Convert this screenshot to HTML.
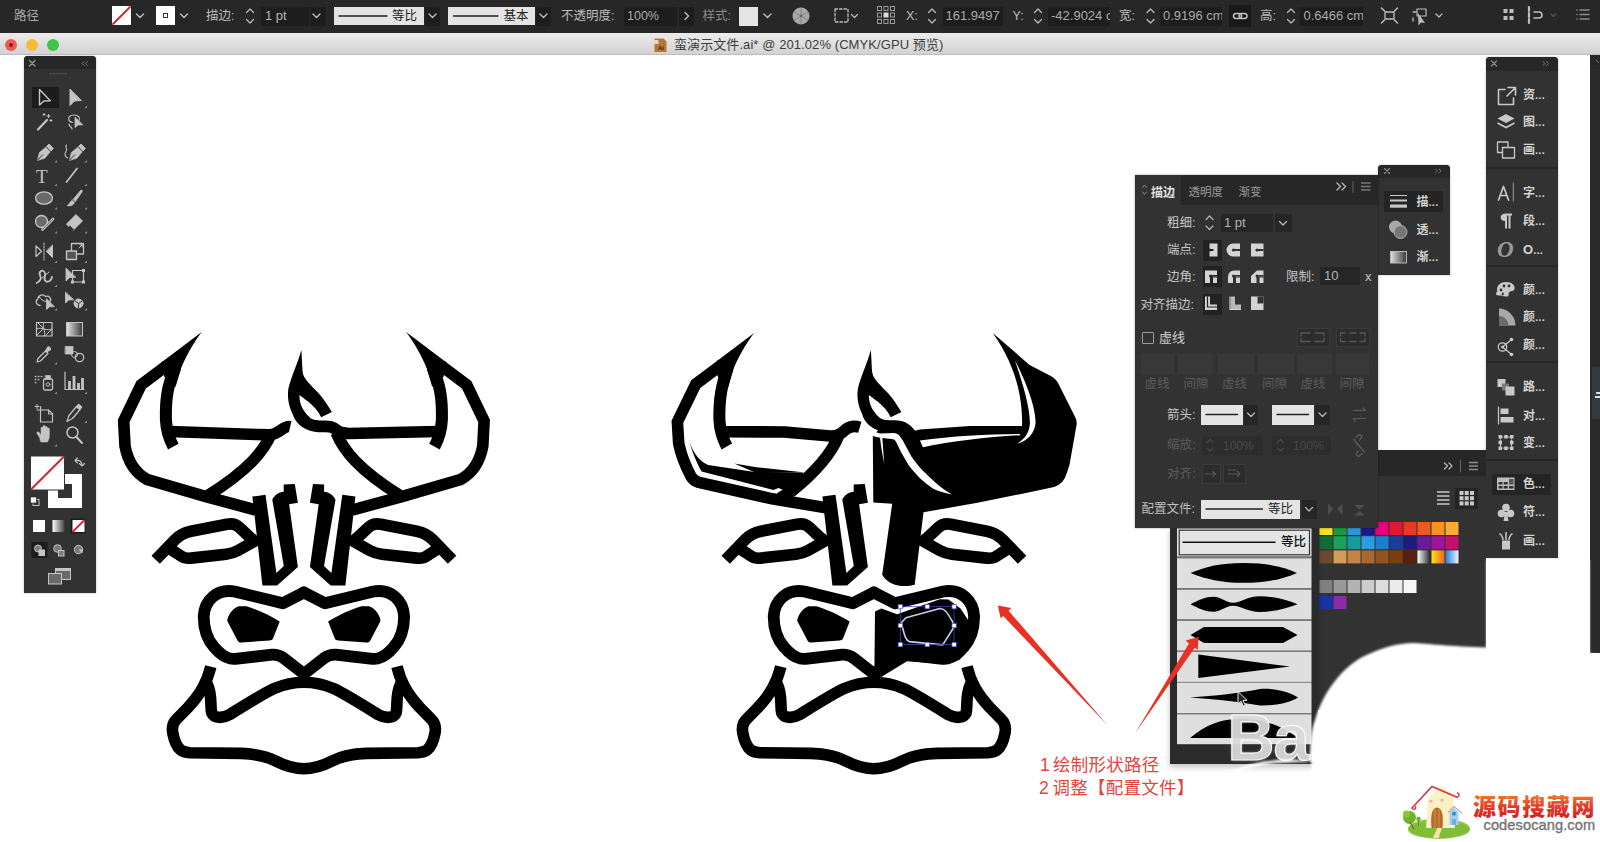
<!DOCTYPE html>
<html lang="zh-CN">
<head>
<meta charset="utf-8">
<title>蛮演示文件.ai</title>
<style>
html,body{margin:0;padding:0;}
body{width:1600px;height:842px;overflow:hidden;background:#fff;position:relative;
 font-family:"Liberation Sans","Noto Sans CJK SC",sans-serif;font-size:12px;color:#c8c8c8;}
.abs{position:absolute;}
#topbar{left:0;top:0;width:1600px;height:33px;background:#272727;}
#titlebar{left:0;top:33px;width:1600px;height:22px;background:linear-gradient(#ececec,#d2d2d2);border-bottom:1px solid #bdbdbd;box-sizing:border-box;}
.t{position:absolute;white-space:nowrap;line-height:1;}
.fld{position:absolute;background:#1e1e1e;}
.wbox{position:absolute;background:#e4e4e4;}
svg{position:absolute;left:0;top:0;overflow:visible;}
</style>
</head>
<body>
<div id="topbar" class="abs"></div>
<div id="titlebar" class="abs"></div>
<div id="tb" class="abs" style="left:0;top:0;width:1600px;height:56px;">
<style>
#tb .t{font-size:12.5px;color:#bdbdbd;top:9.5px;}
#tb .fld{top:7px;height:19px;background:#1d1d1d;}
#tb .wbox{top:7px;height:18px;}
</style>
<span class="t" style="left:14px;font-size:12.5px;color:#aaa;">路径</span>
<div class="abs" style="left:112px;top:6px;width:19px;height:19px;background:#fff;"></div>
<div class="abs" style="left:155.5px;top:6px;width:19px;height:19px;background:#fff;"></div>
<div class="abs" style="left:162.5px;top:13px;width:3px;height:3px;border:1.5px solid #333;"></div>
<span class="t" style="left:206px;">描边:</span>
<div class="fld" style="left:261px;width:48px;"></div>
<div class="fld" style="left:310px;width:16px;"></div>
<span class="t" style="left:265px;font-size:13px;top:9px;color:#b5b5b5;">1 pt</span>
<div class="wbox" style="left:334px;width:90px;"></div>
<div class="fld" style="left:425px;width:15px;"></div>
<span class="t" style="left:392px;color:#222;font-size:12.5px;">等比</span>
<div class="wbox" style="left:448px;width:87px;"></div>
<div class="fld" style="left:536px;width:15px;"></div>
<span class="t" style="left:503.5px;color:#222;font-size:12.5px;">基本</span>
<span class="t" style="left:561px;">不透明度:</span>
<div class="fld" style="left:623.5px;width:53px;"></div>
<div class="fld" style="left:679px;width:15px;"></div>
<span class="t" style="left:627px;color:#aaa;">100%</span>
<span class="t" style="left:702.5px;color:#8a8a8a;">样式:</span>
<div class="abs" style="left:738.5px;top:6.5px;width:19px;height:19px;background:#e4e4e4;"></div>
<span class="t" style="left:906px;">X:</span>
<div class="fld" style="left:942.5px;width:60px;"></div>
<span class="t" style="left:945.5px;color:#aaa;font-size:13px;top:9px;">161.9497</span>
<span class="t" style="left:1012.5px;">Y:</span>
<div class="fld" style="left:1047.5px;width:62px;overflow:hidden;"><span class="t" style="left:3.5px;top:2px;color:#aaa;font-size:13px;">-42.9024 cm</span></div>
<span class="t" style="left:1119px;">宽:</span>
<div class="fld" style="left:1160px;width:62px;overflow:hidden;"><span class="t" style="left:3px;top:2px;color:#aaa;font-size:13px;">0.9196 cm</span></div>
<div class="fld" style="left:1229px;width:22px;top:5px;height:22px;background:#191919;"></div>
<span class="t" style="left:1260px;">高:</span>
<div class="fld" style="left:1299.5px;width:63px;overflow:hidden;"><span class="t" style="left:4px;top:2px;color:#aaa;font-size:13px;">0.6466 cm</span></div>
<!-- title bar -->
<div class="abs" style="left:5px;top:39px;width:12px;height:12px;border-radius:6px;background:#ee5b55;"></div>
<div class="abs" style="left:9px;top:43px;width:4px;height:4px;border-radius:2px;background:#8e1a14;"></div>
<div class="abs" style="left:26px;top:39px;width:12px;height:12px;border-radius:6px;background:#f6bd3b;"></div>
<div class="abs" style="left:46.5px;top:39px;width:12px;height:12px;border-radius:6px;background:#3ec54a;"></div>
<span class="t" style="left:674px;top:38px;font-size:13px;letter-spacing:.08px;color:#3c3c3c;">蛮演示文件.ai* @ 201.02% (CMYK/GPU 预览)</span>
<svg width="1600" height="56" viewBox="0 0 1600 56">
 <g fill="none" stroke="#bdbdbd" stroke-width="1.4" stroke-linecap="round" stroke-linejoin="round">
  <line x1="113" y1="24" x2="130" y2="7" stroke="#d2232a" stroke-width="1.8"/>
  <path d="M136.5 14l3.5 3.5 3.5-3.5"/>
  <path d="M180.5 14l3.5 3.5 3.5-3.5"/>
  <path d="M246.5 12.5l3.5-3.5 3.5 3.5M246.5 19.5l3.5 3.5 3.5-3.5" stroke-width="1.2"/>
  <path d="M313 14l3.5 3.5 3.5-3.5"/>
  <path d="M429 14l3.5 3.5 3.5-3.5"/>
  <path d="M540 14l3.5 3.5 3.5-3.5"/>
  <path d="M685 12.5l3.5 3.5-3.5 3.5"/>
  <path d="M764 14l3.5 3.5 3.5-3.5"/>
  <line x1="339" y1="16" x2="387" y2="16" stroke="#222" stroke-width="1.3"/>
  <line x1="453.5" y1="16" x2="498" y2="16" stroke="#222" stroke-width="1.3"/>
  <!-- steppers -->
  <path d="M928.5 12.5l3.5-3.5 3.5 3.5M928.5 19.5l3.5 3.5 3.5-3.5" stroke-width="1.2"/>
  <path d="M1034.5 12.5l3.5-3.5 3.5 3.5M1034.5 19.5l3.5 3.5 3.5-3.5" stroke-width="1.2"/>
  <path d="M1147 12.5l3.5-3.5 3.5 3.5M1147 19.5l3.5 3.5 3.5-3.5" stroke-width="1.2"/>
  <path d="M1287.5 12.5l3.5-3.5 3.5 3.5M1287.5 19.5l3.5 3.5 3.5-3.5" stroke-width="1.2"/>
  <!-- dashed rect icon -->
  <rect x="835" y="9" width="13" height="13" stroke-dasharray="2.5 2" stroke-width="1.3"/>
  <path d="M851.5 14.5l3 3 3-3" stroke-width="1.2"/>
  <!-- link icon -->
  <rect x="1233.5" y="13.5" width="8" height="5" rx="2.5" stroke-width="1.5"/>
  <rect x="1239" y="13.5" width="8" height="5" rx="2.5" stroke-width="1.5"/>
  <!-- icon1 -->
  <rect x="1385" y="12" width="9" height="7" stroke-width="1.3"/>
  <path d="M1381.5 8l3 3M1397.5 8l-3 3M1381.5 23l3-3M1397.5 23l-3-3" stroke-width="1.5"/>
  <!-- icon2 -->
  <rect x="1417" y="9" width="9" height="7" stroke-width="1.2"/>
  <path d="M1413 12h3M1413 18v3" stroke-width="1.3"/>
  <path d="M1436 14l3 3 3-3" stroke-width="1.2"/>
  <path d="M1551 14l2.5 2.5 2.5-2.5" stroke="#555" stroke-width="1.2"/>
  <!-- icon4 -->
  <path d="M1529 7v17" stroke-width="2.2" stroke-dasharray="4 2"/>
  <path d="M1534 12h5a3 3 0 0 1 0 6h-5" stroke-width="1.6"/>
  <!-- list icon -->
  <path d="M1580 10h9M1580 14.5h9M1580 19h9" stroke="#8a8a8a" stroke-width="1.5"/>
  <path d="M1577 10h.1M1577 14.5h.1M1577 19h.1" stroke="#8a8a8a" stroke-width="1.5"/>
 </g>
 <g fill="#bdbdbd">
  <path d="M1418 13l7 10-4-.5-2.5 3z"/>
  <circle cx="801" cy="16" r="8.5" fill="#a8a8a8"/>
  <g fill="#3a3a3a"><circle cx="801" cy="16" r="1.2"/><path d="M801 8.5v15M794 12l14 8M794 20l14-8" stroke="#777" stroke-width=".7"/></g>
  <!-- 9 grid -->
  <g fill="none" stroke="#9a9a9a" stroke-width="1">
   <rect x="877.5" y="6.5" width="4" height="4"/><rect x="884" y="6.5" width="4" height="4"/><rect x="890.5" y="6.5" width="4" height="4"/>
   <rect x="877.5" y="13" width="4" height="4"/><rect x="890.5" y="13" width="4" height="4"/>
   <rect x="877.5" y="19.5" width="4" height="4"/><rect x="884" y="19.5" width="4" height="4"/><rect x="890.5" y="19.5" width="4" height="4"/>
  </g>
  <rect x="883.5" y="12.5" width="5" height="5" fill="#ddd"/>
  <!-- icon3 four squares -->
  <rect x="1503.500" y="9" width="4" height="4"/><rect x="1509.5" y="9" width="4" height="4"/><rect x="1503.5" y="16" width="4" height="4"/><rect x="1509.5" y="16" width="4" height="4"/>
  <!-- doc icon -->
  <path d="M654.500 38.500h9l3 3v10.500h-12z" fill="#b5763a"/>
  <path d="M653.500 40h5v4h-5z" fill="#e9d9c3"/>
 </g>
</svg>
<span class="t" style="left:658px;top:44.500px;font-size:6px;color:#3b2511;font-weight:bold;">Ai</span>
</div>
<!-- bulls -->
<svg width="1600" height="842" viewBox="0 0 1600 842">
<g id="bullL">
<path d="M 166.7 365.7 L 141.1 384.9 L 123.7 421.0 L 125.0 446.0 C 127.5 459.7 133.7 472.2 147.4 479.6 L 206.0 496.6 L 255.9 510.1" fill="none" stroke="#000" stroke-width="11.6" stroke-linecap="butt" stroke-linejoin="miter"/>
<path d="M 441.1 365.7 L 466.7 384.9 L 484.1 421.0 L 482.8 446.0 C 480.3 459.7 474.1 472.2 460.4 479.6 L 401.8 496.6 L 351.9 510.1" fill="none" stroke="#000" stroke-width="11.6" stroke-linecap="butt" stroke-linejoin="miter"/>
<path d="M 201.7 332.1 C 192.7 344.0 185.1 358.3 181.1 368.2 L 175.6 386.8 L 164.2 376.8 L 161.3 362.5 Z" fill="#000"/>
<path d="M 406.1 332.1 C 415.1 344.0 422.7 358.3 426.7 368.2 L 432.2 386.8 L 443.6 376.8 L 446.5 362.5 Z" fill="#000"/>
<path d="M 175.3 367.4 C 167.9 384.9 165.4 397.3 165.9 419.8 C 166.4 429.8 168.9 438.5 173.3 446.7" fill="none" stroke="#000" stroke-width="12" stroke-linecap="butt" stroke-linejoin="round"/>
<path d="M 432.5 367.4 C 439.9 384.9 442.4 397.3 441.9 419.8 C 441.4 429.8 438.9 438.5 434.5 446.7" fill="none" stroke="#000" stroke-width="12" stroke-linecap="butt" stroke-linejoin="round"/>
<path d="M 271.6 432.7 C 264.6 449.7 249.7 469.7 206.0 496.6" fill="none" stroke="#000" stroke-width="11.6" stroke-linecap="butt" stroke-linejoin="round"/>
<path d="M 336.2 432.7 C 343.2 449.7 358.1 469.7 401.8 496.6" fill="none" stroke="#000" stroke-width="11.6" stroke-linecap="butt" stroke-linejoin="round"/>
<path d="M 252.4 496.6 L 265.5 494.8 L 276.4 573.0 L 283.8 566.1 L 272.3 499.7 C 274.3 495.1 278.6 492.3 283.7 491.7 L 283.7 484.6 L 294.8 484.0 L 297.9 502.8 L 289.1 504.3 L 297.9 566.9 L 277.1 585.4 L 262.4 585.4 Z" fill="#000"/>
<path d="M 355.4 496.6 L 342.3 494.8 L 331.4 573.0 L 324.0 566.1 L 335.5 499.7 C 333.5 495.1 329.2 492.3 324.1 491.7 L 324.1 484.6 L 313.0 484.0 L 309.9 502.8 L 318.7 504.3 L 309.9 566.9 L 330.7 585.4 L 345.4 585.4 Z" fill="#000"/>
<path d="M 155.7 559.8 L 175 539.7 Q 181.3 533.2 191 531.2 L 227 524.2 Q 234.5 522.7 239.5 527.4 L 256.5 543.6" fill="none" stroke="#000" stroke-width="11.7" stroke-linecap="butt" stroke-linejoin="round"/>
<path d="M 452.1 559.8 L 432.8 539.7 Q 426.5 533.2 416.8 531.2 L 380.8 524.2 Q 373.3 522.7 368.3 527.4 L 351.3 543.6" fill="none" stroke="#000" stroke-width="11.7" stroke-linecap="butt" stroke-linejoin="round"/>
<path d="M 170.9 549.3 L 181 556 Q 185.1 558.8 191 558.1 L 226 554.2 Q 232.6 553.5 238 550.5 L 258.5 539" fill="none" stroke="#000" stroke-width="11.7" stroke-linecap="butt" stroke-linejoin="round"/>
<path d="M 436.9 549.3 L 426.8 556.0 Q 422.7 558.8 416.8 558.1 L 381.8 554.2 Q 375.2 553.5 369.8 550.5 L 349.3 539.0" fill="none" stroke="#000" stroke-width="11.7" stroke-linecap="butt" stroke-linejoin="round"/>
<path d="M 303.9 592.4 L 282.9 603.3 L 234.5 591.5 C 217 588.5 204.5 600 203.7 616.4 C 203.7 628 207 639 214 647 C 219 653 224 657 230.4 658.6 C 233 659.2 236 658.8 237.5 658.6 L 272.2 654.6 Q 278.5 654.3 283.5 658 L 303.9 673.8" fill="none" stroke="#000" stroke-width="11.8" stroke-linecap="round" stroke-linejoin="round"/>
<path d="M 303.9 592.4 L 324.9 603.3 L 373.3 591.5 C 390.8 588.5 403.3 600.0 404.1 616.4 C 404.1 628.0 400.8 639.0 393.8 647.0 C 388.8 653.0 383.8 657.0 377.4 658.6 C 374.8 659.2 371.8 658.8 370.3 658.6 L 335.6 654.6 Q 329.3 654.3 324.3 658.0 L 303.9 673.8" fill="none" stroke="#000" stroke-width="11.8" stroke-linecap="round" stroke-linejoin="round"/>
<path d="M 227.3 621 C 227.3 616 233 608 238.5 606.3 L 246.5 606.3 C 256 609 270 615.5 279.7 621.5 L 273 638.5 C 272.3 640 271 640.3 269.5 640.4 L 241.5 642.6 C 239.5 642.7 238.3 642 237.5 640.5 Z" fill="#000"/>
<path d="M 380.5 621.0 C 380.5 616.0 374.8 608.0 369.3 606.3 L 361.3 606.3 C 351.8 609.0 337.8 615.5 328.1 621.5 L 334.8 638.5 C 335.5 640.0 336.8 640.3 338.3 640.4 L 366.3 642.6 C 368.3 642.7 369.5 642.0 370.3 640.5 Z" fill="#000"/>
<path d="M 210.8 666.6 C 207.0 681.8 201.3 693.2 188.0 707.5 L 176.0 719.8 C 172.4 723.6 171.7 727.4 172.8 733.1 C 174.3 740.7 176.6 746.4 180.4 749.8 C 183.3 752.1 186.1 752.5 189.9 752.7 L 241.2 753.4 C 256.4 754.0 267.8 756.9 275.4 760.9 C 283.0 764.8 292.5 768.8 304.3 768.8" fill="none" stroke="#000" stroke-width="11.6" stroke-linecap="butt" stroke-linejoin="round"/>
<path d="M 397.0 666.6 C 400.8 681.8 406.5 693.2 419.8 707.5 L 431.8 719.8 C 435.4 723.6 436.1 727.4 435.0 733.1 C 433.5 740.7 431.2 746.4 427.4 749.8 C 424.5 752.1 421.7 752.5 417.9 752.7 L 366.6 753.4 C 351.4 754.0 340.0 756.9 332.4 760.9 C 324.8 764.8 315.3 768.8 303.5 768.8" fill="none" stroke="#000" stroke-width="11.6" stroke-linecap="butt" stroke-linejoin="round"/>
<path d="M 207.0 683.7 C 212.7 695.1 209.9 706.5 211.8 713.2 C 213.7 717.9 222.2 718.9 229.8 714.5 C 248.8 702.7 264.0 693.2 273.7 688.8 C 283.0 684.8 294.4 682.3 304.3 682.3" fill="none" stroke="#000" stroke-width="11.6" stroke-linecap="butt" stroke-linejoin="round"/>
<path d="M 400.8 683.7 C 395.1 695.1 397.9 706.5 396.0 713.2 C 394.1 717.9 385.6 718.9 378.0 714.5 C 359.0 702.7 343.8 693.2 334.1 688.8 C 324.8 684.8 313.4 682.3 303.5 682.3" fill="none" stroke="#000" stroke-width="11.6" stroke-linecap="butt" stroke-linejoin="round"/>
<path d="M 170.0 431.5 L 256.7 434.5 L 269.9 434.9 C 279.9 434.1 283.4 425.0 290.2 426.6" fill="none" stroke="#000" stroke-width="11.6" stroke-linecap="butt" stroke-linejoin="round"/>
<path d="M 437.9 431.5 L 348.2 433.5 L 338.7 432.1" fill="none" stroke="#000" stroke-width="11.6" stroke-linecap="butt" stroke-linejoin="round"/>
<path d="M 301.3 350.1 C 297.7 363.5 291.5 376.0 288.4 388.4 C 286.7 399.1 289.7 411.6 296.8 420.5 L 310.3 417.7 C 303.9 412.5 299.1 404.5 299.5 395.2 L 303.4 375.6 C 302.0 370.6 302.3 361.7 301.3 350.1 Z" fill="#000"/>
<path d="M 300.4 367.1 L 303.4 375.6 C 308.4 384.9 319.1 392.0 325.3 401.8 L 331.9 412.0 L 321.2 417.3 C 318.2 410.7 313.7 406.3 308.4 401.8 C 304.8 399.1 302.2 397.0 299.8 395.2 L 295.9 395.6 Z" fill="#000"/>
<path d="M 298.6 413.4 C 301.3 420.5 308.4 425.9 319.1 426.4 C 326.2 426.8 330.7 425.0 336.9 430.3 C 339.6 432.6 341.3 434.8 343.1 437.4" fill="none" stroke="#000" stroke-width="11.8" stroke-linecap="butt" stroke-linejoin="round"/>
</g>
<g id="bullR">
<path d="M 822.4 496.6 L 835.5 494.8 L 846.4 573.0 L 853.8 566.1 L 842.3 499.7 C 844.3 495.1 848.6 492.3 853.7 491.7 L 853.7 484.6 L 864.8 484.0 L 867.9 502.8 L 859.1 504.3 L 867.9 566.9 L 847.1 585.4 L 832.4 585.4 Z" fill="#000"/>
<path d="M 725.7 559.8 L 745.0 539.7 Q 751.3 533.2 761.0 531.2 L 797.0 524.2 Q 804.5 522.7 809.5 527.4 L 826.5 543.6" fill="none" stroke="#000" stroke-width="11.7" stroke-linecap="butt" stroke-linejoin="round"/>
<path d="M 740.9 549.3 L 751.0 556.0 Q 755.1 558.8 761.0 558.1 L 796.0 554.2 Q 802.6 553.5 808.0 550.5 L 828.5 539.0" fill="none" stroke="#000" stroke-width="11.7" stroke-linecap="butt" stroke-linejoin="round"/>
<path d="M 873.9 592.4 L 852.9 603.3 L 804.5 591.5 C 787.0 588.5 774.5 600.0 773.7 616.4 C 773.7 628.0 777.0 639.0 784.0 647.0 C 789.0 653.0 794.0 657.0 800.4 658.6 C 803.0 659.2 806.0 658.8 807.5 658.6 L 842.2 654.6 Q 848.5 654.3 853.5 658.0 L 873.9 673.8" fill="none" stroke="#000" stroke-width="11.8" stroke-linecap="round" stroke-linejoin="round"/>
<path d="M 797.3 621.0 C 797.3 616.0 803.0 608.0 808.5 606.3 L 816.5 606.3 C 826.0 609.0 840.0 615.5 849.7 621.5 L 843.0 638.5 C 842.3 640.0 841.0 640.3 839.5 640.4 L 811.5 642.6 C 809.5 642.7 808.3 642.0 807.5 640.5 Z" fill="#000"/>
<path d="M 780.8 666.6 C 777.0 681.8 771.3 693.2 758.0 707.5 L 746.0 719.8 C 742.4 723.6 741.7 727.4 742.8 733.1 C 744.3 740.7 746.6 746.4 750.4 749.8 C 753.3 752.1 756.1 752.5 759.9 752.7 L 811.2 753.4 C 826.4 754.0 837.8 756.9 845.4 760.9 C 853.0 764.8 862.5 768.8 874.3 768.8" fill="none" stroke="#000" stroke-width="11.6" stroke-linecap="butt" stroke-linejoin="round"/>
<path d="M 777.0 683.7 C 782.7 695.1 779.9 706.5 781.8 713.2 C 783.7 717.9 792.2 718.9 799.8 714.5 C 818.8 702.7 834.0 693.2 843.7 688.8 C 853.0 684.8 864.4 682.3 874.3 682.3" fill="none" stroke="#000" stroke-width="11.6" stroke-linecap="butt" stroke-linejoin="round"/>
<path d="M 1022.1 559.8 L 1002.8 539.7 Q 996.5 533.2 986.8 531.2 L 950.8 524.2 Q 943.3 522.7 938.3 527.4 L 921.3 543.6" fill="none" stroke="#000" stroke-width="11.7" stroke-linecap="butt" stroke-linejoin="round"/>
<path d="M 1006.9 549.3 L 996.8 556.0 Q 992.7 558.8 986.8 558.1 L 951.8 554.2 Q 945.2 553.5 939.8 550.5 L 919.3 539.0" fill="none" stroke="#000" stroke-width="11.7" stroke-linecap="butt" stroke-linejoin="round"/>
<path d="M 873.9 592.4 L 894.9 603.3 L 943.3 591.5 C 960.8 588.5 973.3 600.0 974.1 616.4 C 974.1 628.0 970.8 639.0 963.8 647.0 C 958.8 653.0 953.8 657.0 947.4 658.6 C 944.8 659.2 941.8 658.8 940.3 658.6 L 905.6 654.6 Q 899.3 654.3 894.3 658.0 L 873.9 673.8" fill="none" stroke="#000" stroke-width="11.8" stroke-linecap="round" stroke-linejoin="round"/>
<path d="M 967.0 666.6 C 970.8 681.8 976.5 693.2 989.8 707.5 L 1001.8 719.8 C 1005.4 723.6 1006.1 727.4 1005.0 733.1 C 1003.5 740.7 1001.2 746.4 997.4 749.8 C 994.5 752.1 991.7 752.5 987.9 752.7 L 936.6 753.4 C 921.4 754.0 910.0 756.9 902.4 760.9 C 894.8 764.8 885.3 768.8 873.5 768.8" fill="none" stroke="#000" stroke-width="11.6" stroke-linecap="butt" stroke-linejoin="round"/>
<path d="M 970.8 683.7 C 965.1 695.1 967.9 706.5 966.0 713.2 C 964.1 717.9 955.6 718.9 948.0 714.5 C 929.0 702.7 913.8 693.2 904.1 688.8 C 894.8 684.8 883.4 682.3 873.5 682.3" fill="none" stroke="#000" stroke-width="11.6" stroke-linecap="butt" stroke-linejoin="round"/>
<path d="M 870.8 350.1 C 867.2 363.5 861.0 376.0 857.9 388.4 C 856.2 399.1 859.2 411.6 866.3 420.5 L 879.8 417.7 C 873.4 412.5 868.6 404.5 869.0 395.2 L 872.9 375.6 C 871.5 370.6 871.8 361.7 870.8 350.1 Z" fill="#000"/>
<path d="M 869.9 367.1 L 872.9 375.6 C 877.9 384.9 888.6 392.0 894.8 401.8 L 901.4 412.0 L 890.7 417.3 C 887.7 410.7 883.2 406.3 877.9 401.8 C 874.3 399.1 871.7 397.0 869.3 395.2 L 865.4 395.6 Z" fill="#000"/>
<path d="M 868.1 413.4 C 870.8 420.5 877.9 425.9 888.6 426.4 C 895.7 426.8 900.2 425.0 906.4 430.3 C 909.1 432.6 910.8 434.8 912.6 437.4" fill="none" stroke="#000" stroke-width="11.8" stroke-linecap="butt" stroke-linejoin="round"/>
<path d="M 754.1 333.1 C 745.0 345.0 737.4 359.2 733.4 369.2 L 727.9 387.7 L 717.5 376.3 L 717.0 360.9 Z" fill="#000"/>
<path d="M 722.4 364.1 L 695.8 384.0 L 677.4 421.8 L 678.7 443.3 C 681 455 685 465 691.1 476.6 C 693 480 696 481.5 699 482.5 L 772.1 498.8 L 829 508.3" fill="none" stroke="#000" stroke-width="11.6" stroke-linecap="butt" stroke-linejoin="miter"/>
<path d="M 727.8 367.4 C 721.9 384.9 718.9 397.3 719.4 419.8 C 719.9 429.8 722.4 438.5 726.8 446.5" fill="none" stroke="#000" stroke-width="12" stroke-linecap="butt" stroke-linejoin="round"/>
<path d="M 722.4 431.7 L 784.7 432.0 L 790 432.5 L 830 436 C 838 436.5 842 433 846 429.2 C 850 426.3 855 425.8 859.8 427.2" fill="none" stroke="#000" stroke-width="11.6" stroke-linecap="butt" stroke-linejoin="round"/>
<path d="M 838.5 436 C 832 452 818 470 792 491 L 780 498" fill="none" stroke="#000" stroke-width="11.6" stroke-linecap="butt" stroke-linejoin="round"/>
<path d="M 688.5 437.4 C 691.1 449.2 697.7 460.3 708.1 464.9 L 756.4 472.2 L 803.5 472.7 L 795.6 495.6 L 778.6 488.1 L 773.4 489.9 L 701.6 471.4 C 696.3 462.2 691.1 449.2 688.5 437.4 Z" fill="#000"/>
<path d="M 734.2 463.6 L 756.4 467.2 L 804.8 472.4 L 756.4 473.0 Z" fill="#000"/>
<path d="M 992.7 333.0 L 1029.6 364.9 L 1050.8 375.9 Q 1055.8 378.4 1058.3 383.4 L 1075.0 416.8 Q 1077.3 421.0 1076.5 425.3 L 1069.5 464.7 L 1067.0 472.6 Q 1063.5 484.6 1054.1 487.0 L 1022.4 493.7 L 977.5 502.7 L 923.5 512.3 L 914.7 584.7 C 905 587.5 889 587 882.2 574.8 L 892.2 503.7 L 873.3 502.4 L 872.8 436.2 L 880 428 L 907.4 432.5 L 919.9 429.5 L 969.8 426.0 L 1022.1 426.0 C 1022.6 399.8 1017.2 367.4 992.7 333.0 Z" fill="#000"/>
<path d="M 1014.7 359.9 C 1026.6 382.4 1035.6 407.3 1035.6 422.3 C 1035.1 432.7 1027.6 441.2 1017.2 443.7 C 1025.1 438.5 1029.9 432.2 1029.9 422.3 C 1029.9 407.3 1022.6 382.4 1014.7 359.9 Z" fill="#fff"/>
<path d="M 919.9 440.5 C 952.3 436.0 987.2 434.2 1020.1 434.0 L 1020.1 435.2 C 987.2 437.2 952.3 441.0 922.9 447.2 Z" fill="#fff"/>
<path d="M 872.7 435.9 L 874.6 431.8 L 880 433.6 L 894.25 433.1 C 897 433.5 899 435 900 436.4 C 902 439 903.5 441.5 904.7 444 L 911.4 456.4 C 915 461.5 919 466.5 922.75 470.6 C 927 475 932 479.5 937 483.9 C 942 488 947 491.5 952.2 494.6 C 946 493 939.5 491.5 933.2 488.7 C 928.5 485.5 924 482 919.9 478.2 C 916 474 912 469.5 908.5 464.9 L 901.85 453.5 C 900 450 898.5 447 897.1 444 C 896 441.5 895 439.8 893.3 439.25 L 880 437.8 Z" fill="#fff"/>
<path d="M 880 437.5 L 882.4 438.3 C 883 447 883.6 455 884.3 463.5 C 882.5 455 881 447 880 437.5 Z" fill="#fff"/>
<path d="M 868.1 413.4 C 870.8 420.5 877.9 425.9 888.6 426.4 C 895.7 426.8 900.2 425.0 906.4 430.3 C 909.1 432.6 910.8 434.8 912.6 437.4" fill="none" stroke="#000" stroke-width="11.8" stroke-linecap="butt" stroke-linejoin="round"/>
<path d="M 875.0 611.4 L 881.4 608.5 L 897.1 614.2 L 939.8 599.2 L 948.4 599.5 L 960.5 608.6 L 968.1 620.1 L 974.1 622.0 L 971.2 643.4 L 959.8 659.8 L 945.5 664.1 L 907.0 661.3 L 874.3 681.2 Z" fill="#000"/>
<path d="M 901.3 622.8 L 905.9 617.8 L 939.8 608.5 C 944.1 608.5 946.3 610.6 952.7 622.0 L 953.4 628.0 L 942.7 644.9 L 909.2 641.6 C 906.3 640.6 904.9 637.7 901.3 622.8 Z" fill="none" stroke="#c9caf2" stroke-width="1.6" stroke-linejoin="round"/>
<rect x="900.3" y="606.7" width="53.7" height="37.9" fill="none" stroke="#3d4aa8" stroke-width="0.8"/>
<rect x="898.2" y="604.6" width="4.2" height="4.2" fill="#fff" stroke="#5560b8" stroke-width="0.7"/>
<rect x="898.2" y="623.5" width="4.2" height="4.2" fill="#fff" stroke="#5560b8" stroke-width="0.7"/>
<rect x="898.2" y="642.5" width="4.2" height="4.2" fill="#fff" stroke="#5560b8" stroke-width="0.7"/>
<rect x="925.1" y="604.6" width="4.2" height="4.2" fill="#fff" stroke="#5560b8" stroke-width="0.7"/>
<rect x="925.1" y="642.5" width="4.2" height="4.2" fill="#fff" stroke="#5560b8" stroke-width="0.7"/>
<rect x="952.0" y="604.6" width="4.2" height="4.2" fill="#fff" stroke="#5560b8" stroke-width="0.7"/>
<rect x="952.0" y="623.5" width="4.2" height="4.2" fill="#fff" stroke="#5560b8" stroke-width="0.7"/>
<rect x="952.0" y="642.5" width="4.2" height="4.2" fill="#fff" stroke="#5560b8" stroke-width="0.7"/>
</g>
</svg>
<div class="abs" style="left:23.500px;top:56px;width:72px;height:536.5px;background:#323232;border-radius:4px 4px 0 0;box-shadow:0 0 2px rgba(0,0,0,.35);"></div>
<div class="abs" style="left:23.500px;top:56px;width:72px;height:13px;background:#272727;border-radius:4px 4px 0 0;"></div>
<div class="abs" style="left:31.500px;top:87px;width:27px;height:21px;background:#1c1c1c;"></div>
<svg width="120" height="600" viewBox="0 0 120 600">
<g fill="none" stroke="#c4c4c4" stroke-width="1.4" stroke-linecap="round" stroke-linejoin="round">
 <path d="M29.500 60.500l5.500 5.500M35 60.500l-5.500 5.500" stroke="#9a9a9a" stroke-width="1.3"/>
 <path d="M84 61.500l-2 2 2 2M87.500 61.500l-2 2 2 2" stroke="#777" stroke-width="1"/>
 <path d="M50 73.700h18" stroke="#4a4a4a" stroke-width="1.5" stroke-dasharray="1.5 1.500"/>
 <!-- row1 -->
 <path d="M39.500 89.500v15.500l4.300-4 6.500-.2z" stroke-width="1.400"/>
 <path d="M70 89.500v16l4.500-4.500 6.500-.5z" fill="#c4c4c4" stroke-width="1"/>
 <!-- row2 wand, lasso -->
 <path d="M38 129.500l9-9.500" stroke-width="2.200"/>
 <path d="M48.500 114.500v3M47 116h3M44 113.500v2M43 114.500h2M51 119.500v2M50 120.500h2" stroke-width="1"/>
 <path d="M72.500 122.500c-5-1-5.500-7 1-7.500 5-.3 7 3 5.500 5.500M69 124c0 3 3 2.500 3 5" stroke-width="1.200"/>
 <path d="M75 117.500v10l3-2.500 4.500-.2z" fill="#c4c4c4" stroke-width=".8"/>
 <!-- row3 pens -->
 <path d="M37.500 160l2-7.500 6-5 4.500 4.500-5 6z" fill="#c4c4c4" stroke-width=".8"/>
 <path d="M46.500 146.500l2.500-2.500 4.500 4.500-2.500 2.500z" fill="#c4c4c4" stroke-width=".8"/>
 <path d="M37.800 159.700l5-5" stroke="#323232" stroke-width="1"/>
 <path d="M69.500 160l2-7.500 6-5 4.500 4.500-5 6z" fill="#c4c4c4" stroke-width=".8"/>
 <path d="M78.500 146.500l2.500-2.500 4.500 4.500-2.500 2.500z" fill="#c4c4c4" stroke-width=".8"/>
 <path d="M69.800 159.700l5-5" stroke="#323232" stroke-width="1"/>
 <path d="M66.500 145c-2 2 1.500 4-.5 6.500s-1 5 1.500 6.500" stroke-width="1.100"/>
 <!-- row4 T, line -->
 <path d="M66.500 182l10.500-13.500" stroke-width="1.700"/>
 <!-- row5 ellipse, brush -->
 <ellipse cx="44" cy="198" rx="8.500" ry="6.200" fill="#6a6a6a" stroke-width="1.300"/>
 <path d="M73 199.500l7.500-9c1-1 2.500 0 1.500 1.500l-6.500 9.500z" fill="#c4c4c4" stroke-width=".6"/>
 <path d="M72 200.500l2.500 2c-1 3-4.500 4-7.500 3 2-.5 2.500-3.500 5-5z" fill="#c4c4c4" stroke-width=".6"/>
 <!-- row6 shaper, eraser -->
 <circle cx="41.500" cy="221.500" r="6" fill="#6a6a6a" stroke-width="1.300"/>
 <path d="M42.500 229.500l10.500-10.500" stroke-width="2.800"/>
 <path d="M42.500 229.500l10.500-10.500" stroke="#323232" stroke-width=".6"/>
 <path d="M66.500 224l9.500-9.500 6.500 6.500-9.500 9.500z" fill="#c4c4c4" stroke-width=".8"/>
 <path d="M69 226.500l4 4" stroke="#323232" stroke-width="2.500" stroke-linecap="butt"/>
 <!-- row7 reflect, scale -->
 <path d="M44 243v17" stroke-width="1" stroke-dasharray="2 1.200"/>
 <path d="M36 246v10.500l5.500-5.200z" stroke-width="1.200"/>
 <path d="M52.500 245.500v12l-6-6z" fill="#c4c4c4" stroke-width="1"/>
 <rect x="71.500" y="243.500" width="12" height="10.500" stroke-width="1.300"/>
 <rect x="66.500" y="251" width="10" height="8.500" fill="#555" stroke-width="1.300"/>
 <path d="M79 248l3-3M80 244.800h2.200v2.200" stroke-width="1"/>
 <!-- row8 width, free transform -->
 <path d="M36.500 283c4-1 5-5 3.500-8s2-6 4.500-3-2 7 1 9 6-1 6.500-4" stroke-width="1.800"/>
 <path d="M37 282.500l12-10.500" stroke-width="1"/>
 <path d="M66 268.500v12.500l3.800-3.500 5.700-.2z" fill="#c4c4c4" stroke-width=".8"/>
 <rect x="72.500" y="270.500" width="11" height="11.500" stroke-width="1.200"/>
 <g fill="#c4c4c4" stroke="none"><rect x="82" y="269" width="3" height="3"/><rect x="82" y="280.500" width="3" height="3"/><rect x="71" y="280.500" width="3" height="3"/></g>
 <!-- row9 shape builder, live paint -->
 <path d="M40 305.500c-4-.5-5-5-2-6.500 0-4 5.500-5.500 7.500-2.500 3.500-1.500 6.500 2 4.500 5" stroke-width="1.300"/>
 <path d="M39 296.500c2 3 4 5 8 5" stroke-width="1"/>
 <path d="M46.500 299v10.500l3-2.700 4.500-.2z" fill="#c4c4c4" stroke-width=".8"/>
 <path d="M65.500 292.500v10.500l3.200-3 4.800-.2z" fill="#c4c4c4" stroke-width=".8"/>
 <circle cx="78.500" cy="303.500" r="4.500" fill="#c4c4c4" stroke-width="1"/>
 <path d="M78.500 303.500v4.500M78.500 303.500l-3.500-2.500M78.500 303.500l3.500-2.500" stroke="#323232" stroke-width="1"/>
 <!-- row10 mesh, gradient -->
 <rect x="36.500" y="322.500" width="15.500" height="13.500" stroke-width="1.200"/>
 <path d="M36.500 329c5-3 10 3 15.500 0M44 322.500c-3 4 3 9 0 13.500M37 335l6-6M45 336l6-6M38 323l5 5" stroke-width="1"/>
 <!-- row11 eyedropper, blend -->
 <path d="M37 362l1-3.500 7.500-7.500 2.500 2.500-7.500 7.500z" stroke-width="1.200"/>
 <path d="M45.500 351l2-3.500c1.500-1.500 4 1 2.500 2.500l-3.500 2z" fill="#c4c4c4" stroke-width="1.200"/>
 <rect x="65.500" y="346.500" width="7.500" height="7.500" fill="#c4c4c4" stroke-width=".8"/>
 <circle cx="74.500" cy="354.500" r="3" stroke-width="1"/>
 <circle cx="79.500" cy="357.500" r="4.200" stroke-width="1.300"/>
 <!-- row12 sprayer, graph -->
 <rect x="43.500" y="379" width="9" height="11" rx="1.500" stroke-width="1.300"/>
 <rect x="45.500" y="375.500" width="5" height="3.500" fill="#c4c4c4" stroke-width=".6"/>
 <circle cx="48" cy="384.500" r="1.800" stroke-width="1"/>
 <path d="M35.500 376.500h.1M38.500 376.500h.1M41.500 376.500h.1M35.500 379.500h.1M38.500 379.500h.1M35.500 382.500h.1" stroke-width="1.700"/>
 <path d="M65 372v17.500h19" stroke-width="1.200"/>
 <path d="M69.500 389v-8M74 389v-13M78.500 389v-6M82.500 389v-11" stroke-width="2.800" stroke-linecap="butt"/>
 <!-- row13 artboard, slice -->
 <path d="M40.500 406.500v15.500h12v-8l-4-4h-11.500" stroke-width="1.200"/>
 <path d="M48.500 410v4h4" stroke-width="1"/>
 <path d="M37 404.500v4M35 406.500h4" stroke-width="1"/>
 <path d="M67 421.500l2-6 7.500-9 3.500 3-7.500 9z" stroke-width="1.300"/>
 <path d="M76.500 406.500l2-2.500 3.500 3-2 2.500z" fill="#c4c4c4" stroke-width="1"/>
 <!-- row14 hand, zoom -->
 <path d="M39.500 437.500l-2.500-4c-.8-1.500 1.200-2.500 2.200-1l1.800 2.500v-7c0-1.500 2-1.500 2 0v-1.500c0-1.500 2.200-1.500 2.200 0v1c0-1.500 2.200-1.500 2.200 0v1.500c0-1.300 2-1.300 2 0v6.500c0 3-1 5-2 6.500h-6.500z" fill="#c4c4c4" stroke-width=".5"/>
 <circle cx="72.500" cy="432.500" r="5.500" stroke-width="1.500"/>
 <path d="M76.500 437l5.500 6" stroke-width="2"/>
 <!-- swap arrows -->
 <path d="M76 460.500c4-.5 6 1.500 6 5" stroke-width="1.200"/>
 <path d="M77.500 458l-2.500 2.500 2.500 2.500M79.500 463.500l2.500 2.500 2.500-2.500" stroke-width="1.100"/>
</g>
<g fill="#c4c4c4">
 <text x="36" y="182.500" font-family="'Liberation Serif',serif" font-size="19" fill="#c4c4c4">T</text>
 <!-- small corner triangles -->
 <g fill="#8e8e8e">
  <path d="M87 105.500l-2.500 2.500h2.500z"/>
  <path d="M57 160l-2.500 2.500h2.500zM87 160l-2.500 2.500h2.500z"/>
  <path d="M57 183.500l-2.500 2.500h2.500zM87 183.500l-2.500 2.500h2.500z"/>
  <path d="M57 207l-2.500 2.500h2.500zM87 207l-2.500 2.500h2.500z"/>
  <path d="M57 231l-2.500 2.500h2.500zM87 231l-2.500 2.500h2.500z"/>
  <path d="M57 260.500l-2.500 2.500h2.500zM87 260.500l-2.500 2.500h2.500z"/>
  <path d="M57 284.500l-2.500 2.500h2.500z"/>
  <path d="M57 308l-2.500 2.500h2.500zM87 308l-2.500 2.500h2.500z"/>
  <path d="M57 362l-2.500 2.500h2.500z"/>
  <path d="M57 391.500l-2.500 2.500h2.500zM87 391.500l-2.500 2.500h2.500z"/>
  <path d="M87 420.500l-2.500 2.500h2.500z"/>
  <path d="M57 444l-2.500 2.500h2.500z"/>
 </g>
</g>
<!-- gradient tool -->
<linearGradient id="gt" x1="0" x2="1" y1="0" y2="0"><stop offset="0" stop-color="#e6e6e6"/><stop offset="1" stop-color="#3a3a3a"/></linearGradient>
<rect x="66.500" y="322.500" width="16" height="13.500" fill="url(#gt)" stroke="#c4c4c4" stroke-width="1"/>
<!-- fill / stroke -->
<rect x="48" y="474" width="34" height="34" fill="#fff"/>
<rect x="58" y="484" width="14" height="14" fill="#323232"/>
<rect x="30.500" y="456" width="34" height="34" fill="#fff" stroke="#323232" stroke-width="1"/>
<line x1="31" y1="489.500" x2="64" y2="456.500" stroke="#d2232a" stroke-width="2"/>
<rect x="33" y="499.500" width="6" height="6" fill="#323232" stroke="#c4c4c4" stroke-width="1"/>
<rect x="30.500" y="497" width="6" height="6" fill="#fff" stroke="#323232" stroke-width=".8"/>
<!-- three squares -->
<rect x="33" y="520" width="12" height="12" fill="#fff"/>
<linearGradient id="g2" x1="0" x2="1" y1="0" y2="0"><stop offset="0" stop-color="#fff"/><stop offset="1" stop-color="#444"/></linearGradient>
<rect x="52.500" y="520" width="12" height="12" fill="url(#g2)"/>
<rect x="70.500" y="518.500" width="15" height="15" fill="#1c1c1c"/>
<rect x="72.500" y="520" width="12" height="12" fill="#fff"/>
<line x1="72.500" y1="532" x2="84.500" y2="520" stroke="#d2232a" stroke-width="1.800"/>
<!-- draw modes -->
<rect x="31.500" y="542" width="16" height="16" fill="#1c1c1c"/>
<g fill="#7a7a7a" stroke="#c4c4c4" stroke-width="1">
 <circle cx="38" cy="548.500" r="3.500"/><rect x="39" y="550" width="5.500" height="5.500" fill="#c4c4c4"/>
 <circle cx="57.500" cy="548.500" r="3.800"/><rect x="58.500" y="550.500" width="5.500" height="5.500" fill="#7a7a7a"/>
 <circle cx="78.500" cy="549.500" r="4.200"/><path d="M78.500 549.500h4v4" fill="#c4c4c4" stroke="none"/>
</g>
<!-- screen mode -->
<rect x="55.500" y="568.500" width="15" height="11" fill="#6a6a6a" stroke="#c4c4c4" stroke-width="1"/>
<rect x="48.500" y="573.500" width="13" height="10.500" fill="#6a6a6a" stroke="#c4c4c4" stroke-width="1"/>
<path d="M55.500 568.500h15v2.500h-15z" fill="#c4c4c4"/>
</svg>
<style>
.dk{position:absolute;background:#323232;}
.lb{position:absolute;white-space:nowrap;line-height:1;font-size:12px;font-weight:bold;color:#d2d2d2;letter-spacing:0;}
.lb i{font-style:normal;font-weight:bold;letter-spacing:.3px;font-size:11px;}
</style>
<!-- far right sliver -->
<div class="dk" style="left:1590px;top:55px;width:10px;height:598px;background:#2a2a2a;"></div>
<div class="dk" style="left:1590px;top:55px;width:10px;height:14px;background:#262626;"></div>
<div class="dk" style="left:1592px;top:366.500px;width:8px;height:52px;background:#343a42;"></div><div class="dk" style="left:1596px;top:392px;width:4px;height:2px;background:#ddd;"></div><div class="dk" style="left:1595px;top:395.500px;width:5px;height:2px;background:#ddd;"></div>
<!-- right dock -->
<div class="dk" style="left:1486px;top:57px;width:72px;height:501px;border-radius:4px 4px 0 0;box-shadow:0 0 2px rgba(0,0,0,.35);"></div>
<div class="dk" style="left:1486px;top:57px;width:72px;height:13.500px;background:#272727;border-radius:4px 4px 0 0;"></div>
<div class="dk" style="left:1486px;top:167px;width:72px;height:2px;background:#272727;"></div>
<div class="dk" style="left:1486px;top:265px;width:72px;height:2px;background:#272727;"></div>
<div class="dk" style="left:1486px;top:360.500px;width:72px;height:2px;background:#272727;"></div>
<div class="dk" style="left:1486px;top:458.500px;width:72px;height:2px;background:#272727;"></div>
<div class="dk" style="left:1492px;top:473.500px;width:58.500px;height:21px;background:#242424;"></div>
<span class="lb" style="left:1523px;top:89px;">资<i>...</i></span>
<span class="lb" style="left:1523px;top:116px;">图<i>...</i></span>
<span class="lb" style="left:1523px;top:144px;">画<i>...</i></span>
<span class="lb" style="left:1523px;top:187px;">字<i>...</i></span>
<span class="lb" style="left:1523px;top:214.500px;">段<i>...</i></span>
<span class="lb" style="left:1523px;top:242.500px;font-size:13px;">O<i>...</i></span>
<span class="lb" style="left:1523px;top:283.500px;">颜<i>...</i></span>
<span class="lb" style="left:1523px;top:311px;">颜<i>...</i></span>
<span class="lb" style="left:1523px;top:339px;">颜<i>...</i></span>
<span class="lb" style="left:1523px;top:381px;">路<i>...</i></span>
<span class="lb" style="left:1523px;top:409.500px;">对<i>...</i></span>
<span class="lb" style="left:1523px;top:437px;">变<i>...</i></span>
<span class="lb" style="left:1523px;top:477.500px;">色<i>...</i></span>
<span class="lb" style="left:1523px;top:506px;">符<i>...</i></span>
<span class="lb" style="left:1523px;top:534.500px;">画<i>...</i></span>
<!-- small float panel -->
<div class="dk" style="left:1378px;top:164.500px;width:72px;height:110px;border-radius:4px 4px 0 0;box-shadow:0 0 2px rgba(0,0,0,.35);"></div>
<div class="dk" style="left:1378px;top:164.500px;width:72px;height:13.500px;background:#272727;border-radius:4px 4px 0 0;"></div>
<div class="dk" style="left:1384px;top:190.500px;width:58.500px;height:21px;background:#242424;"></div>
<span class="lb" style="left:1416.500px;top:196px;">描<i>...</i></span>
<span class="lb" style="left:1416.500px;top:224px;">透<i>...</i></span>
<span class="lb" style="left:1416.500px;top:251px;">渐<i>...</i></span>
<svg width="1600" height="600" viewBox="0 0 1600 600">
<g fill="none" stroke="#c8c8c8" stroke-width="1.400" stroke-linecap="round" stroke-linejoin="round">
 <path d="M1491.500 61l5 5M1496.500 61l-5 5" stroke="#8a8a8a" stroke-width="1.200"/>
 <path d="M1543 61.500l2 2-2 2M1546.500 61.500l2 2-2 2" stroke="#777" stroke-width="1"/>
 <path d="M1384.500 168.500l5 5M1389.500 168.500l-5 5" stroke="#8a8a8a" stroke-width="1.200"/>
 <path d="M1435.500 169l2 2-2 2M1439 169l2 2-2 2" stroke="#777" stroke-width="1"/>
 <path d="M1596 60l2.500 2.500" stroke="#777" stroke-width="1"/>
 <!-- 1 asset export -->
 <path d="M1505 89.500h-6.500v15h15v-6.500" stroke-width="1.600"/>
 <path d="M1508 87.500h7.500v7.500M1515 88l-8 8" stroke-width="1.600"/>
 <!-- 3 artboards -->
 <rect x="1497.500" y="142" width="10.500" height="10.500" stroke-width="1.300"/>
 <rect x="1502.500" y="147.500" width="12" height="10.500" fill="#323232" stroke-width="1.300"/>
 <!-- 4 A| -->
 <path d="M1498.500 200l5-13.500 5 13.500M1500.300 195.500h6.400" stroke-width="1.700"/>
 <path d="M1513.300 183v18" stroke-width="1" stroke="#999"/>
 <!-- 9 color guide -->
 <circle cx="1502.500" cy="347" r="4.200" stroke-width="1.300"/>
 <path d="M1502.500 347l8.500-7M1502.500 347l8.500 7" stroke-width="1.200"/>
 <!-- 11 align -->
 <path d="M1498.500 407v17" stroke-width="1.200"/>
 <!-- 12 transform -->
 <rect x="1500.500" y="437" width="11" height="11" stroke-width="1.200" stroke-dasharray="2 1.500"/>
</g>
<g fill="#c8c8c8">
 <!-- 2 layers -->
 <path d="M1506 114l8.500 4.500-8.500 4.500-8.500-4.500z"/>
 <path d="M1497.500 123l8.500 4.500 8.500-4.500" fill="none" stroke="#c8c8c8" stroke-width="1.600"/>
 <!-- 5 paragraph -->
 <path d="M1504 213.500h8v2h-1.500v13h-2v-13h-1.500v13h-2v-7.500c-6 0-6-7.500 1-7.500z"/>
 <!-- 6 O italic -->
 <text x="1497" y="256.500" font-family="'Liberation Serif',serif" font-style="italic" font-weight="bold" font-size="23" fill="#9a9a9a">O</text>
 <!-- 7 palette -->
 <path d="M1506 282c6 0 9.500 3.500 8.500 7-1 3-4.500 1.500-5.500 3.500s1 4-3 4c-5.500 0-9-3-9-7s3.500-7.500 9-7.500z"/>
 <g fill="#323232"><circle cx="1501" cy="290" r="1.400"/><circle cx="1504" cy="286" r="1.400"/><circle cx="1509" cy="286" r="1.400"/><circle cx="1502.500" cy="294" r="1.400"/></g>
 <ellipse cx="1499" cy="293.500" rx="3" ry="2" fill="#c8c8c8"/>
 <!-- 8 color guide wedge -->
 <path d="M1499 308.500v17h16.500c0-9-7-17-16.500-17z" fill="#a8a8a8"/>
 <path d="M1499 316v9.500h9.500c0-5-4-9.500-9.500-9.500z" fill="#6a6a6a"/>
 <!-- 9 dots -->
 <circle cx="1511.500" cy="339.500" r="1.800"/><circle cx="1511.500" cy="354.500" r="1.800"/><circle cx="1502.500" cy="347" r="1.500"/>
 <!-- 10 pathfinder -->
 <rect x="1497.500" y="379" width="8" height="8"/><rect x="1502" y="383.500" width="7" height="7" fill="#7a7a7a"/><rect x="1505.500" y="386.500" width="9" height="9"/>
 <!-- 11 align -->
 <rect x="1500.500" y="408.500" width="8" height="5.500"/><rect x="1500.500" y="417" width="13" height="5.500"/>
 <!-- 12 transform handles -->
 <g><rect x="1498.500" y="435" width="3.500" height="3.500"/><rect x="1504.200" y="435" width="3.500" height="3.500"/><rect x="1510" y="435" width="3.500" height="3.500"/>
 <rect x="1498.500" y="440.700" width="3.500" height="3.500"/><rect x="1510" y="440.700" width="3.500" height="3.500"/>
 <rect x="1498.500" y="446.500" width="3.500" height="3.500"/><rect x="1504.200" y="446.500" width="3.500" height="3.500"/><rect x="1510" y="446.500" width="3.500" height="3.500"/></g>
 <!-- 13 swatches -->
 <rect x="1497" y="477.500" width="17.500" height="12.500" fill="#bdbdbd"/>
 <g fill="#323232"><rect x="1498.500" y="482" width="4" height="2.500"/><rect x="1503.700" y="482" width="4" height="2.500"/><rect x="1509" y="479" width="4.500" height="5.500" fill="#555"/><rect x="1498.500" y="486" width="4" height="2.500"/><rect x="1503.700" y="486" width="4" height="2.500"/><rect x="1509" y="486" width="4.500" height="2.500"/></g>
 <!-- 14 symbols club -->
 <circle cx="1506" cy="507.500" r="3.800"/><circle cx="1501.500" cy="513.500" r="3.800"/><circle cx="1510.500" cy="513.500" r="3.800"/><path d="M1505 512h2l1.500 9h-5z"/>
 <!-- 15 brushes -->
 <path d="M1502 540.500h8v9h-8z"/>
 <path d="M1506 540v-8M1503 540c0-3-1.500-5-3.500-6.500M1509 540c0-3 1.500-5 3.500-6.500" fill="none" stroke="#c8c8c8" stroke-width="1.500"/>
 <!-- float: stroke icon -->
 <rect x="1390" y="195" width="17" height="1"/><rect x="1390" y="199.500" width="17" height="2"/><rect x="1390" y="204.500" width="17" height="3.200"/>
 <!-- float: transparency -->
 <circle cx="1395.500" cy="227" r="6.500" fill="#a8a8a8"/><circle cx="1400.500" cy="232" r="6.500" fill="#777" stroke="#b0b0b0" stroke-width="1"/>
</g>
<linearGradient id="gd" x1="0" x2="1" y1="0" y2="0"><stop offset="0" stop-color="#e0e0e0"/><stop offset="1" stop-color="#3a3a3a"/></linearGradient>
<rect x="1390.500" y="251.500" width="16" height="11.500" fill="url(#gd)" stroke="#b8b8b8" stroke-width="1"/>
</svg>
<style>
#sp .t{font-size:12.500px;color:#c6c6c6;}
#sp .dim{color:#5c5c5c;}
#sp .fld{background:#262626;}
</style>
<!-- swatches panel (behind) -->
<div class="dk" style="left:1300px;top:449.500px;width:185.500px;height:260px;background:#323232;"></div>
<div class="dk" style="left:1378px;top:449.500px;width:107.500px;height:26px;background:#272727;"></div>
<div class="dk" style="left:1455px;top:487.500px;width:23px;height:21px;background:#242424;"></div>
<svg width="1600" height="842" viewBox="0 0 1600 842">
 <g fill="none" stroke="#b8b8b8" stroke-width="1.300" stroke-linecap="round" stroke-linejoin="round">
  <path d="M1444.500 463l3 3-3 3M1449 463l3 3-3 3"/>
  <path d="M1460.500 460v12" stroke="#666" stroke-width="1"/>
  <path d="M1469 462.500h9M1469 466h9M1469 469.500h9" stroke="#8a8a8a" stroke-width="1.500" stroke-linecap="butt"/>
  <path d="M1437 492h12.500M1437 496h12.500M1437 500h12.500M1437 504h12.500" stroke="#c8c8c8" stroke-width="1.500" stroke-linecap="butt"/>
 </g>
 <g fill="#c8c8c8">
  <rect x="1459.500" y="491" width="4" height="4"/><rect x="1464.700" y="491" width="4" height="4"/><rect x="1470" y="491" width="4" height="4"/>
  <rect x="1459.500" y="496.200" width="4" height="4"/><rect x="1464.700" y="496.200" width="4" height="4"/><rect x="1470" y="496.200" width="4" height="4"/>
  <rect x="1459.500" y="501.400" width="4" height="4"/><rect x="1464.700" y="501.400" width="4" height="4"/><rect x="1470" y="501.400" width="4" height="4"/>
 </g>
 <defs>
  <linearGradient id="s1" x1="0" x2="1"><stop offset="0" stop-color="#fff"/><stop offset="1" stop-color="#222"/></linearGradient>
  <linearGradient id="s2" x1="0" x2="1"><stop offset="0" stop-color="#ffe21a"/><stop offset="1" stop-color="#f0641e"/></linearGradient>
  <linearGradient id="s3" x1="0" x2="1"><stop offset="0" stop-color="#2a7fd8"/><stop offset="1" stop-color="#eef4ff"/></linearGradient>
 </defs>
 <g id="sw">
  <!-- row1 y 522-535 -->
  <rect x="1319.500" y="522" width="13" height="13" fill="#f7e11c"/>
  <rect x="1333.500" y="522" width="13" height="13" fill="#1a993d"/>
  <rect x="1347.500" y="522" width="13" height="13" fill="#2a95dc"/>
  <rect x="1361.500" y="522" width="13" height="13" fill="#1b188f"/>
  <rect x="1375.500" y="522" width="13" height="13" fill="#e6007e"/>
  <rect x="1389.500" y="522" width="13" height="13" fill="#e2192c"/>
  <rect x="1403.500" y="522" width="13" height="13" fill="#e83a22"/>
  <rect x="1417.500" y="522" width="13" height="13" fill="#ec5b1d"/>
  <rect x="1431.500" y="522" width="13" height="13" fill="#f7921e"/>
  <rect x="1445.500" y="522" width="13" height="13" fill="#f9ac30"/>
  <!-- row2 -->
  <rect x="1319.500" y="536.200" width="13" height="13" fill="#0d6e36"/>
  <rect x="1333.500" y="536.200" width="13" height="13" fill="#1aa25d"/>
  <rect x="1347.500" y="536.200" width="13" height="13" fill="#159d9c"/>
  <rect x="1361.500" y="536.200" width="13" height="13" fill="#2a9ee1"/>
  <rect x="1375.500" y="536.200" width="13" height="13" fill="#1b7fcd"/>
  <rect x="1389.500" y="536.200" width="13" height="13" fill="#1a3ca1"/>
  <rect x="1403.500" y="536.200" width="13" height="13" fill="#1c1a7d"/>
  <rect x="1417.500" y="536.200" width="13" height="13" fill="#6a1b9b"/>
  <rect x="1431.500" y="536.200" width="13" height="13" fill="#9c1499"/>
  <rect x="1445.500" y="536.200" width="13" height="13" fill="#c41170"/>
  <!-- row3 -->
  <rect x="1319.500" y="550.400" width="13" height="13" fill="#6b4a30"/>
  <rect x="1333.500" y="550.400" width="13" height="13" fill="#d39c59"/>
  <rect x="1347.500" y="550.400" width="13" height="13" fill="#c48444"/>
  <rect x="1361.500" y="550.400" width="13" height="13" fill="#a96730"/>
  <rect x="1375.500" y="550.400" width="13" height="13" fill="#93531d"/>
  <rect x="1389.500" y="550.400" width="13" height="13" fill="#7b3f0c"/>
  <rect x="1403.500" y="550.400" width="13" height="13" fill="#5a1e11"/>
  <rect x="1417.500" y="550.400" width="13" height="13" fill="url(#s1)"/>
  <rect x="1431.500" y="550.400" width="13" height="13" fill="url(#s2)"/>
  <rect x="1445.500" y="550.400" width="13" height="13" fill="url(#s3)"/>
  <!-- gray row -->
  <rect x="1319.500" y="580" width="13" height="13" fill="#808080"/>
  <rect x="1333.500" y="580" width="13" height="13" fill="#999"/>
  <rect x="1347.500" y="580" width="13" height="13" fill="#b3b3b3"/>
  <rect x="1361.500" y="580" width="13" height="13" fill="#ccc"/>
  <rect x="1375.500" y="580" width="13" height="13" fill="#dcdcdc"/>
  <rect x="1389.500" y="580" width="13" height="13" fill="#ebebeb"/>
  <rect x="1403.500" y="580" width="13" height="13" fill="#f6f6f6"/>
  <rect x="1319.500" y="596" width="13" height="13" fill="#1535a9"/>
  <rect x="1333.500" y="596" width="13" height="13" fill="#8e2aa7"/>
 </g>
</svg>
<!-- stroke panel -->
<div id="sp" class="abs" style="left:0;top:0;width:1600px;height:842px;">
<div class="dk" style="left:1134.500px;top:175px;width:243.500px;height:352.500px;background:#323232;box-shadow:0 0 2px rgba(0,0,0,.4);"></div>
<div class="dk" style="left:1134.500px;top:175px;width:243.500px;height:29.500px;background:#272727;"></div>
<div class="dk" style="left:1134.500px;top:175px;width:46px;height:29.500px;background:#323232;"></div>
<span class="t" style="left:1151px;top:186.500px;font-weight:bold;color:#e0e0e0;font-size:12px;">描边</span>
<span class="t" style="left:1188.500px;top:186.500px;color:#9a9a9a;font-size:11.500px;">透明度</span>
<span class="t" style="left:1238.500px;top:186.500px;color:#9a9a9a;font-size:11.500px;">渐变</span>
<span class="t" style="left:1167px;top:216.500px;">粗细:</span>
<div class="fld" style="left:1221px;top:214px;width:52px;height:18px;"></div>
<div class="fld" style="left:1275px;top:214px;width:16.500px;height:18px;"></div>
<span class="t" style="left:1224px;top:216px;font-size:13px;color:#b5b5b5;">1 pt</span>
<span class="t" style="left:1167px;top:244px;">端点:</span>
<div class="fld" style="left:1202.500px;top:240px;width:19px;height:21px;background:#222;"></div>
<span class="t" style="left:1167px;top:270.500px;">边角:</span>
<div class="fld" style="left:1202.500px;top:266px;width:19px;height:21px;background:#222;"></div>
<span class="t" style="left:1286px;top:270.500px;">限制:</span>
<div class="fld" style="left:1320px;top:267px;width:40px;height:18px;"></div>
<span class="t" style="left:1324px;top:269px;font-size:13px;color:#b5b5b5;">10</span>
<span class="t" style="left:1365px;top:270px;font-size:13px;">x</span>
<span class="t" style="left:1140.500px;top:298.500px;">对齐描边:</span>
<div class="fld" style="left:1202.500px;top:294px;width:19px;height:21px;background:#222;"></div>
<div class="abs" style="left:1142px;top:332px;width:9.500px;height:9.500px;border:1px solid #9a9a9a;border-radius:1px;"></div>
<span class="t" style="left:1159px;top:330.500px;font-size:13px;color:#d0d0d0;">虚线</span>
<div class="fld" style="left:1297px;top:327.500px;width:33px;height:19px;background:#2c2c2c;border:1px solid #3a3a3a;box-sizing:border-box;"></div>
<div class="fld" style="left:1336px;top:327.500px;width:33.500px;height:19px;background:#2c2c2c;border:1px solid #3a3a3a;box-sizing:border-box;"></div>
<div class="fld" style="left:1141px;top:354px;width:33px;height:19.500px;background:#383838;"></div>
<div class="fld" style="left:1178px;top:354px;width:35px;height:19.500px;background:#383838;"></div>
<div class="fld" style="left:1217.500px;top:354px;width:36.500px;height:19.500px;background:#383838;"></div>
<div class="fld" style="left:1258px;top:354px;width:35.500px;height:19.500px;background:#383838;"></div>
<div class="fld" style="left:1297px;top:354px;width:35px;height:19.500px;background:#383838;"></div>
<div class="fld" style="left:1335.500px;top:354px;width:33px;height:19.500px;background:#383838;"></div>
<span class="t dim" style="left:1144.500px;top:378px;">虚线</span>
<span class="t dim" style="left:1183.500px;top:378px;">间隙</span>
<span class="t dim" style="left:1222px;top:378px;">虚线</span>
<span class="t dim" style="left:1262px;top:378px;">间隙</span>
<span class="t dim" style="left:1300.500px;top:378px;">虚线</span>
<span class="t dim" style="left:1339.500px;top:378px;">间隙</span>
<span class="t" style="left:1167px;top:408.500px;">箭头:</span>
<div class="wbox" style="left:1201px;top:405px;width:41.500px;height:19.500px;"></div>
<div class="fld" style="left:1244px;top:405px;width:14px;height:19.500px;"></div>
<div class="wbox" style="left:1272px;top:405px;width:41.500px;height:19.500px;"></div>
<div class="fld" style="left:1315px;top:405px;width:15px;height:19.500px;"></div>
<span class="t dim" style="left:1167px;top:439px;">缩放:</span>
<div class="fld" style="left:1201.500px;top:436px;width:61px;height:19px;background:#2d2d2d;"></div>
<div class="fld" style="left:1272px;top:436px;width:59px;height:19px;background:#2d2d2d;"></div>
<span class="t" style="left:1223px;top:439.500px;color:#484848;font-size:12px;">100%</span>
<span class="t" style="left:1293px;top:439.500px;color:#484848;font-size:12px;">100%</span>
<span class="t dim" style="left:1167px;top:468px;">对齐:</span>
<div class="fld" style="left:1201.500px;top:464px;width:19px;height:20px;background:#2c2c2c;border:1px solid #3a3a3a;box-sizing:border-box;"></div>
<div class="fld" style="left:1223px;top:464px;width:22.500px;height:20px;background:#2c2c2c;border:1px solid #3a3a3a;box-sizing:border-box;"></div>
<span class="t" style="left:1141.500px;top:502.500px;color:#bdbdbd;">配置文件:</span>
<div class="wbox" style="left:1201px;top:499.500px;width:98.500px;height:19px;"></div>
<div class="fld" style="left:1301.500px;top:499.500px;width:15px;height:19px;"></div>
<span class="t" style="left:1268px;top:502.500px;color:#222;font-size:12.500px;">等比</span>
</div>
<svg width="1600" height="842" viewBox="0 0 1600 842">
<g fill="none" stroke="#b8b8b8" stroke-width="1.300" stroke-linecap="round" stroke-linejoin="round">
 <!-- tab bar -->
 <path d="M1142.500 187.500l2-2.500 2 2.500M1142.500 192l2 2.500 2-2.500" stroke="#8a8a8a" stroke-width="1"/>
 <path d="M1337 183l3.500 3.500-3.500 3.500M1342 183l3.500 3.500-3.500 3.500" stroke-width="1.400"/>
 <path d="M1353 181.500v11" stroke="#666" stroke-width="1"/>
 <path d="M1361 183h9.500M1361 186.500h9.500M1361 190h9.500" stroke="#777" stroke-width="1.600" stroke-linecap="butt"/>
 <!-- weight stepper & chevron -->
 <path d="M1206 219.500l3.500-3.500 3.500 3.500M1206 226l3.500 3.500 3.500-3.500" stroke-width="1.200"/>
 <path d="M1279.500 221.500l3.500 3.500 3.500-3.500"/>
 <!-- arrowheads -->
 <line x1="1206" y1="414.500" x2="1237.500" y2="414.500" stroke="#222" stroke-width="1.400"/>
 <line x1="1277" y1="414.500" x2="1308.500" y2="414.500" stroke="#222" stroke-width="1.400"/>
 <path d="M1247.500 413l3.500 3.500 3.500-3.500"/>
 <path d="M1319 413l3.500 3.500 3.500-3.500"/>
 <path d="M1353 410.500h12.500l-2.500-2.500M1365.500 418.500h-12.500l2.500 2.500" stroke="#5a5a5a" stroke-width="1.200"/>
 <!-- link broken -->
 <path d="M1356 437.500l2-2c2-2 5 1 3 3l-1.500 1.500M1362 453.500l-2 2c-2 2-5-1-3-3l1.500-1.500M1356 443l6 6M1353.500 439l11 13" stroke="#5a5a5a" stroke-width="1.300"/>
 <!-- scale steppers dim -->
 <path d="M1207 442.500l3-3 3 3M1207 448l3 3 3-3M1277.500 442.500l3-3 3 3M1277.500 448l3 3 3-3" stroke="#484848" stroke-width="1.100"/>
 <!-- align icons dim -->
 <path d="M1205.500 474h10l-2.500-2.500M1215.500 474l-2.500 2.500M1228 474h12l-2.500-2.500M1240 474l-2.500 2.500M1228 470h8" stroke="#555" stroke-width="1.100"/>
 <!-- dash buttons dim -->
 <path d="M1301 333h9M1315 333h9M1301 341.500h9M1315 341.500h9M1301 333v3M1324 333v3M1301 341.500v-3M1324 341.500v-3" stroke="#555" stroke-width="1.300"/>
 <path d="M1340.500 333h5M1350 333h6M1360 333h5M1340.500 341.500h5M1350 341.500h6M1360 341.500h5M1340.500 333v3M1365 333v3M1340.500 341.500v-3M1365 341.500v-3" stroke="#555" stroke-width="1.300"/>
 <!-- profile -->
 <line x1="1206" y1="509" x2="1262.500" y2="509" stroke="#222" stroke-width="1.300"/>
 <path d="M1305.500 507.500l3.500 3.500 3.500-3.500"/>
 <path d="M1328 503.500v11l5.500-5.500zM1342.500 503.500v11l-5.500-5.500z" fill="#4e4e4e" stroke="none"/>
 <path d="M1354 505h11l-5.500 4.500zM1354 515.500h11l-5.500-4.500z" fill="#4e4e4e" stroke="none"/>
</g>
<g fill="#d4d4d4">
 <!-- caps -->
 <path d="M1209.500 243.500h8v13h-8z"/><path d="M1206.500 249h7v2h-7z" fill="#222"/><circle cx="1209.800" cy="250" r="1.600" fill="#222"/>
 <path d="M1233 243.500h7v13h-7a6.500 6.500 0 0 1 0-13z"/><path d="M1233 249h7v2h-7z" fill="#323232"/><circle cx="1233.500" cy="250" r="1.600" fill="#323232"/>
 <path d="M1251 243.500h12.500v13h-12.500z"/><path d="M1257 249h6.500v2h-6.500z" fill="#323232"/><circle cx="1257" cy="250" r="1.600" fill="#323232"/>
 <!-- corners -->
 <path d="M1205 270.500h12v6h-6v6.500h-6z"/><path d="M1210 276.500h1.500v6.500h-1.500zM1210 275h7v1.500h-7z" fill="#222"/><circle cx="1210.500" cy="276" r="1.500" fill="#222"/>
 <path d="M1217 277.500v5.500h-4v-5.500z"/>
 <path d="M1234 270.500h6v6h-6v6.500h-6v-6.500a6 6 0 0 1 6-6z"/><path d="M1233 276.500h1.500v6.500h-1.500zM1233 275h7v1.500h-7z" fill="#323232"/><circle cx="1233.500" cy="276" r="1.500" fill="#323232"/>
 <path d="M1240 277.500v5.500h-4v-5.500z"/>
 <path d="M1257 270.500h6.500v6h-6v6.500h-6.500v-7z"/><path d="M1256.500 276.500h1.500v6.500h-1.500zM1256.500 275h7v1.500h-7z" fill="#323232"/><circle cx="1257" cy="276" r="1.500" fill="#323232"/>
 <path d="M1263.500 277.500v5.500h-4v-5.500z"/>
 <!-- align stroke -->
 <path d="M1205 296.500h5v8h7v5.500h-12z"/><path d="M1207.500 296.500v10.500h9.500" fill="none" stroke="#222" stroke-width="1.200"/>
 <path d="M1231 296.500h4v8h6v5h-10z" fill="#b8b8b8"/><path d="M1230 296.500v13h11" fill="none" stroke="#d4d4d4" stroke-width="1.200"/>
 <path d="M1251 296.500h12.500v13.500h-12.500z"/><path d="M1257.500 296.500h6v7h-6z" fill="#323232"/><path d="M1257.500 296.500v7h6" fill="none" stroke="#888" stroke-width="1"/>
</g>
</svg>
<!-- dropdown list -->
<div class="abs" style="left:1170px;top:527.500px;width:148px;height:236.500px;background:#2b2b2b;box-shadow:0 3px 6px rgba(0,0,0,.25);"></div>
<svg width="1600" height="842" viewBox="0 0 1600 842">
 <g fill="#dfdfdf">
  <rect x="1177" y="528.500" width="134.500" height="28" fill="#e4e4e4"/>
  <rect x="1177" y="558.200" width="134.500" height="30"/>
  <rect x="1177" y="589.500" width="134.500" height="30"/>
  <rect x="1177" y="620.700" width="134.500" height="30"/>
  <rect x="1177" y="651.900" width="134.500" height="30"/>
  <rect x="1177" y="683" width="134.500" height="30"/>
  <rect x="1177" y="714.200" width="134.500" height="30"/>
 </g>
 <g fill="none" stroke="#8c8c8c" stroke-width="1">
  <path d="M1177 557.700h134.500M1177 588.900h134.500M1177 620.100h134.500M1177 651.300h134.500M1177 682.500h134.500M1177 713.700h134.500"/>
 </g>
 <rect x="1179.200" y="530.200" width="130.300" height="24.600" fill="none" stroke="#333" stroke-width="1.200"/>
 <line x1="1182.500" y1="542.200" x2="1275.500" y2="542.200" stroke="#111" stroke-width="1.400"/>
 <g fill="#000">
  <path d="M1190.500 573c16-6.500 30-10 53-10 24 0 40 4 53.500 10-14 6-30 9.800-53.500 9.800-23 0-37-3.500-53-9.800z"/>
  <path d="M1190.500 604.200c8-4 15-7.500 23-7.500 8 0 12 6 19.500 6 8 0 14-6.500 27-6.500 14 0 27 4 37.500 8-11 4-24 7.800-37.500 7.800-12 0-19-6.300-27-6.300-7.500 0-12 6-19.500 6-8 0-15-3.500-23-7.500z"/>
  <path d="M1190.500 635l13.500-8h79l14.500 8-14.500 8h-79z"/>
  <path d="M1198.300 654.600l91.500 12-91.500 11.500z"/>
  <path d="M1190 697.500c25-1.500 50-4.500 70-8.500 16-1 30 3.500 38 8.500-8 5-22 8.500-38 8-20-3.500-45-6.500-70-8z"/>
  <path d="M1190 738c10-8 24-19 50-19 30 0 47 11 58 19z"/>
 </g>
 <!-- cursor -->
 <path d="M1238 691.500v12.500l3-2.800 2.300 5 2-.9-2.300-4.900h4z" fill="#222" stroke="#e8e8e8" stroke-width="1"/>
</svg>
<span class="t" style="left:1281px;top:535.500px;color:#111;font-size:12.500px;font-weight:500;">等比</span>
<!-- Ba watermark -->
<span class="t" style="left:1227.500px;top:704.500px;font-size:65px;font-weight:bold;letter-spacing:-1px;font-family:'Liberation Sans',sans-serif;color:rgba(214,214,214,.86);-webkit-text-stroke:1.200px rgba(255,255,255,.9);text-shadow:0 0 3px rgba(255,255,255,.6);">Ba</span>
<!-- white cloud -->
<svg width="1600" height="842" viewBox="0 0 1600 842">
 <defs><filter id="bl" x="-5%" y="-5%" width="110%" height="110%"><feGaussianBlur stdDeviation="0.800"/></filter></defs>
 <path filter="url(#bl)" fill="#fff" d="M1600 655 L1600 842 L1150 842 L1150 800 L1215 790 C1222 780 1236 770 1262.500 765 C1275 762.500 1295 762 1310 762 C1310 745 1311 730 1315 720 C1319 706 1326 692 1335 681 C1345 668 1358 658 1370 653.500 C1384 647 1398 643.500 1412.500 643 C1428 643.500 1450 646.500 1486.500 647.500 L1486.500 560 L1589.500 560 L1589.500 653.500 Z M1311.500 762.500 C1300 759.500 1290 759 1284.800 759.500 C1277 760 1270 760.800 1263.400 761.600 C1256 763 1249 764.800 1242 767 C1236 769.500 1230 773 1224 778 L1220 792 L1311.500 792 Z"/>
</svg>
<!-- red annotations -->
<svg width="1600" height="842" viewBox="0 0 1600 842">
 <g fill="#ea2f23">
  <path d="M997.900 605.600L1011.300 608L1008.600 610.800L1107.800 725.400L1003.200 616L1000.600 618.200Z"/>
  <path d="M1198.600 637L1185.700 640.600L1189 643.400L1135.100 733.300L1194.900 647.500L1197.700 650Z"/>
 </g>
</svg>
<span class="t" style="left:1040px;top:756.500px;font-size:17.500px;color:#e0463e;letter-spacing:.25px;word-spacing:-2.200px;">1 绘制形状路径</span>
<span class="t" style="left:1039px;top:779.500px;font-size:17.500px;color:#e0463e;letter-spacing:.25px;word-spacing:-1.500px;">2 调整【配置文件】</span>
<!-- logo -->
<svg width="1600" height="842" viewBox="0 0 1600 842">
 <defs>
  <linearGradient id="lg" x1="0" x2="0" y1="0" y2="1"><stop offset="0" stop-color="#f2802c"/><stop offset=".55" stop-color="#e2382a"/><stop offset="1" stop-color="#cc1f1c"/></linearGradient>
 </defs>
 <ellipse cx="1439" cy="828.500" rx="31" ry="10" fill="#8cc63f"/>
 <ellipse cx="1439" cy="830" rx="31" ry="9" fill="#7ab82e" opacity=".6"/>
 <path d="M1426 828l2-30 14-12 11 10 2 32z" fill="#fdf0c4"/>
 <path d="M1412 808l20-21.500 24.500 10.500" fill="none" stroke="#d8343a" stroke-width="1.600" stroke-linecap="round"/>
 <path d="M1412 808c1.500 2.500 4.500 1 3.500-1.500M1456.500 797c3 .5 3.500-3.500 1-4" fill="none" stroke="#d8343a" stroke-width="1.300" stroke-linecap="round"/>
 <path d="M1431.500 828c-1-12 0-20 5.500-20.500 5.500.5 6.500 8.500 5.500 20.500z" fill="#b9692a"/>
 <path d="M1435 809v19M1439 809v19" stroke="#e0a060" stroke-width=".8"/>
 <path d="M1449.500 825v-13l4.500-4 4.500 4v13z" fill="#9fd0ee"/>
 <path d="M1448 812.500l6-6 8 6.500" fill="none" stroke="#d8a0a0" stroke-width="1.100"/>
 <rect x="1452.300" y="812" width="3.400" height="3.400" fill="#2a8fd0"/>
 <rect x="1452" y="819" width="4" height="6" fill="#6ab0e0"/>
 <circle cx="1409.500" cy="817.500" r="6.500" fill="#6fb52c"/>
 <circle cx="1406.500" cy="814" r="3.500" fill="#8cc63f"/>
 <path d="M1410 822l4 7" stroke="#8a5a2a" stroke-width="1.300"/>
 <circle cx="1418.500" cy="819" r="2.300" fill="#6fb52c"/>
 <path d="M1418.500 821v5" stroke="#8a5a2a" stroke-width=".8"/>
 <path d="M1433 838c1-4 3-5 4-10h5c-1 4-3 6-3 10z" fill="#f3e3a8"/>
 <g fill="#e8b0a0"><rect x="1429.500" y="800" width="3" height="2.500"/><rect x="1440.500" y="799" width="3" height="2.500"/></g>
 <text x="1473" y="814.500" font-family="'Liberation Sans','Noto Sans CJK SC',sans-serif" font-weight="900" font-size="23" letter-spacing="1.600" fill="url(#lg)" stroke="#fff" stroke-width="2.500" paint-order="stroke">源码搜藏网</text>
 <text x="1483.500" y="829.800" font-family="'Liberation Sans',sans-serif" font-size="14.600" letter-spacing=".1" fill="#747474" stroke="#747474" stroke-width=".35">codesocang.com</text>
</svg>
</body>
</html>
